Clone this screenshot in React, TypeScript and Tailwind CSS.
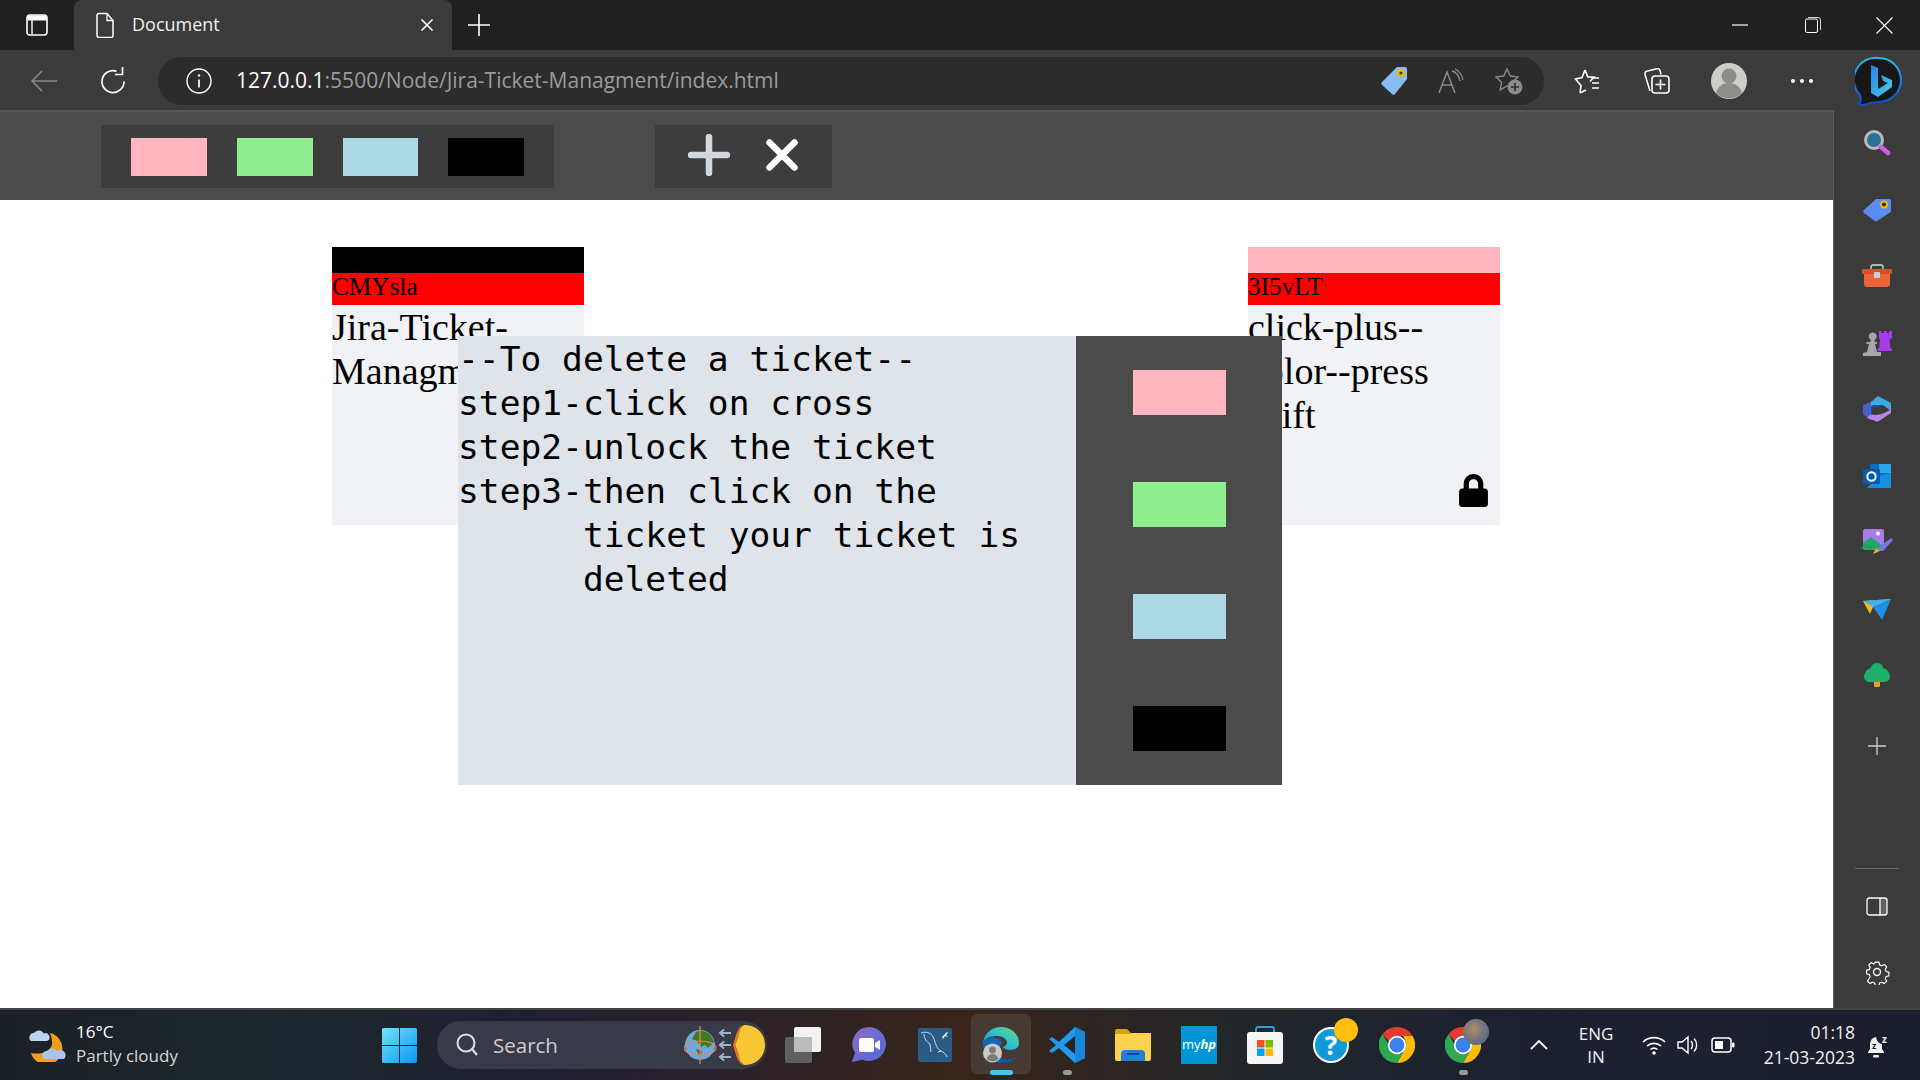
import React from 'react';
import { FaLock } from 'react-icons/fa';

const ui = "font-['Open_Sans','Noto_Sans',sans-serif]";

const Stroke = ({ w, h, children, className = '' }: { w: number; h: number; children: React.ReactNode; className?: string }) => (
  <svg width={w} height={h} viewBox={`0 0 ${w} ${h}`} fill="none" stroke="currentColor" className={className}>
    {children}
  </svg>
);

const Swatch = ({ color }: { color: string }) => <div className={`${color} h-[38px] w-[76px]`} />;

const ModalSwatch = ({ color }: { color: string }) => <div className={`${color} h-[45px] w-[93px]`} />;

const Ticket = ({ header, id, text, locked }: { header: string; id: string; text: string; locked?: boolean }) => (
  <div className="flex h-[278px] w-[252px] flex-col font-['Liberation_Serif',serif] text-black">
    <div className={`${header} h-[26px] shrink-0`} />
    <div className="h-[32px] shrink-0 bg-[#ff0000] text-[25.3px] leading-[26px]">{id}</div>
    <div className="flex flex-1 flex-col bg-[#f1f2f6] text-[38px] leading-[44px]">
      <div className="break-words">{text}</div>
      {locked && <FaLock size={33} className="mt-auto mb-[18px] mr-[10px] self-end" />}
    </div>
  </div>
);

const SideIcon = ({ children }: { children: React.ReactNode }) => (
  <div className="flex h-[66.5px] w-full items-center justify-center">{children}</div>
);

const TaskIcon = ({ children, dot, active }: { children: React.ReactNode; dot?: boolean; active?: boolean }) => (
  <div className="relative flex h-[70px] w-[66px] items-center justify-center">
    {active && <div className="absolute left-[3px] top-[4px] h-[60px] w-[60px] rounded-md border border-[#4a3d36] bg-[#463a34]" />}
    <div className="relative flex">{children}</div>
    {dot && <div className="absolute bottom-[5px] left-[29px] h-[5px] w-[9px] rounded-full bg-[#9a9a9a]" />}
    {active && <div className="absolute bottom-[5px] left-[22px] h-[5px] w-[23px] rounded-full bg-[#4cc2ff]" />}
  </div>
);

const ChromeLogo = () => (
  <svg width="36" height="36" viewBox="0 0 36 36">
    <path d="M18 0a18 18 0 0 1 15.6 9H18a9 9 0 0 0-8.2 5.2L3.6 7A18 18 0 0 1 18 0z" fill="#e33b2e" />
    <path d="M33.6 9A18 18 0 0 1 18 36l7.8-13.5A9 9 0 0 0 26 13.5 9 9 0 0 0 24 9z" fill="#fbbc04" />
    <path d="M18 36A18 18 0 0 1 3.6 7l7.6 13.2A8 8 0 0 0 18 27h3.4l4.4-4.5z" fill="#2fa84f" />
    <circle cx="18" cy="18" r="9.2" fill="#fff" />
    <circle cx="18" cy="18" r="7.4" fill="#3b82f0" />
  </svg>
);

const Avatar = ({ size }: { size: number }) => (
  <svg width={size} height={size} viewBox="0 0 36 36">
    <circle cx="18" cy="18" r="18" fill="#cdcdc9" />
    <circle cx="18" cy="13" r="7.5" fill="#8f8d89" />
    <path d="M5 30c2-7 7-10 13-10s11 3 13 10a18 18 0 0 1-26 0z" fill="#8f8d89" />
  </svg>
);

const TabStrip = () => (
  <div className="flex h-[50px] shrink-0 items-end bg-[#202020] text-white">
    <div className="flex h-[50px] w-[74px] items-center justify-center">
      <Stroke w={24} h={24} className="-mt-[1px]">
        <rect x="2" y="2" width="20" height="20" rx="3" strokeWidth="1.6" />
        <path d="M3 3h18v4H3z" fill="currentColor" strokeWidth="1" />
        <path d="M7 7v14" strokeWidth="1.4" />
      </Stroke>
    </div>
    <div className={`${ui} flex h-[50px] w-[378px] items-center rounded-t-lg bg-[#3b3b3b] pl-[20px] pr-[18px] text-[18px]`}>
      <Stroke w={22} h={26}>
        <path d="M3 3.5a2 2 0 0 1 2-2h8l6 7v15a2 2 0 0 1-2 2H5a2 2 0 0 1-2-2z" strokeWidth="1.5" />
        <path d="M13 1.5v7h6" strokeWidth="1.3" />
      </Stroke>
      <span className="ml-[16px] -mt-[1px] text-[#f0f0f0]">Document</span>
      <Stroke w={14} h={14} className="ml-auto">
        <path d="M1.5 1.5l11 11M12.5 1.5l-11 11" strokeWidth="1.6" />
      </Stroke>
    </div>
    <div className="flex h-[50px] w-[54px] items-center justify-center">
      <Stroke w={22} h={22}>
        <path d="M11 0v22M0 11h22" strokeWidth="1.6" />
      </Stroke>
    </div>
    <div className="ml-auto flex h-[50px] items-center">
      <Stroke w={16} h={2} className="mr-[57px]">
        <path d="M0 1h16" strokeWidth="1.2" />
      </Stroke>
      <Stroke w={16} h={16} className="mr-[55px]">
        <rect x="0.5" y="2" width="12" height="13.5" rx="1.5" strokeWidth="1" />
        <path d="M3 .5h10a2.5 2.5 0 0 1 2.5 2.5v10" strokeWidth="0.8" />
      </Stroke>
      <Stroke w={17} h={17} className="mr-[27px]">
        <path d="M.5.5l16 16M16.5.5l-16 16" strokeWidth="1.1" />
      </Stroke>
    </div>
  </div>
);

const Toolbar = () => (
  <div className="flex h-[60px] shrink-0 items-center bg-[#3b3b3b] pt-[2px] text-white">
    <Stroke w={28} h={24} className="ml-[30px] text-[#8a8a8a]">
      <path d="M27 12H2M12 2L2 12l10 10" strokeWidth="1.5" />
    </Stroke>
    <Stroke w={26} h={28} className="ml-[42px]">
      <path d="M16.5 4.2A11 11 0 1 0 24 14.5" strokeWidth="1.7" />
      <path d="M17.5 1v7.5h-7.5" strokeWidth="1.7" transform="translate(5 -1)" />
    </Stroke>
    <div className={`${ui} ml-[32px] flex h-[48px] w-[1386px] items-center rounded-full bg-[#2c2c2c]`}>
      <Stroke w={26} h={26} className="ml-[28px]">
        <circle cx="13" cy="13" r="12" strokeWidth="1.4" />
        <path d="M13 11.5v8" strokeWidth="1.7" />
        <circle cx="13" cy="7.5" r="1.2" fill="currentColor" stroke="none" />
      </Stroke>
      <div className="ml-[24px] text-[21px] text-[#9b9b9b]">
        <span className="text-white">127.0.0.1</span>:5500/Node/Jira-Ticket-Managment/index.html
      </div>
      <svg width="28" height="30" viewBox="0 0 28 30" className="ml-auto mr-[30px]">
        <path d="M17 1h8a2 2 0 0 1 2 2v10l-12 15a2 2 0 0 1-3 0L2 19a2 2 0 0 1 0-3z" fill="#85bdee" />
        <circle cx="21" cy="7" r="4" fill="#f2b800" />
        <circle cx="21" cy="7" r="1.6" fill="#3a3a3a" />
      </svg>
      <Stroke w={26} h={26} className="mr-[31px] text-[#8b8b8b]">
        <path d="M1 25L9 4l8 21M4 17h10" strokeWidth="1.5" />
        <path d="M14 2c4 1 7 5 8 10M17 0c4 2 7 6 8 11" strokeWidth="1.3" transform="translate(0 1)" />
      </Stroke>
      <svg width="28" height="28" viewBox="0 0 28 28" className="mr-[21px]" fill="none">
        <path d="M12 2l3.3 7 7.7 1-5.6 5.2 1.4 7.6L12 19l-6.8 3.8 1.4-7.6L1 10l7.7-1z" stroke="#8b8b8b" strokeWidth="1.4" />
        <circle cx="20" cy="20" r="7.5" fill="#8b8b8b" />
        <path d="M20 16v8M16 20h8" stroke="#2c2c2c" strokeWidth="1.6" />
      </svg>
    </div>
    <Stroke w={26} h={26} className="ml-[30px]">
      <path d="M11 2l2.8 7H20l-4 4.5M6 25l1-7.5L1.5 11 8 9.5 11 2M6 25l6-3" strokeWidth="1.6" />
      <path d="M17 10h8M18 15h7M18 20h7" strokeWidth="1.6" />
    </Stroke>
    <Stroke w={28} h={28} className="ml-[43px]">
      <path d="M7 24L2 7.5a2.5 2.5 0 0 1 1.7-3.2l10-2.5A2.5 2.5 0 0 1 17 3.5l1 4" strokeWidth="1.5" />
      <rect x="9" y="9" width="17" height="17" rx="3" strokeWidth="1.6" />
      <path d="M17.5 12.5v10M12.5 17.5h10" strokeWidth="1.6" />
    </Stroke>
    <div className="ml-[40px] flex">
      <Avatar size={36} />
    </div>
    <div className="ml-[44px] flex gap-[5px]">
      <div className="h-[4px] w-[4px] rounded-full bg-white" />
      <div className="h-[4px] w-[4px] rounded-full bg-white" />
      <div className="h-[4px] w-[4px] rounded-full bg-white" />
    </div>
    <svg width="48" height="50" viewBox="0 0 48 50" className="ml-[42px]">
      <defs>
        <linearGradient id="bingRing" x1="0" y1="0" x2="0" y2="1">
          <stop offset="0" stopColor="#2fb8f2" />
          <stop offset="1" stopColor="#1348d6" />
        </linearGradient>
        <linearGradient id="bingB" x1="0" y1="0" x2="1" y2="1">
          <stop offset="0" stopColor="#2a7fe8" />
          <stop offset="1" stopColor="#42d0ea" />
        </linearGradient>
      </defs>
      <path d="M24 2a22 22 0 0 1 0 44c-5 0-9 .8-14 2.5-3 1-5 .5-6-.5 2-2 2-5 1-9A22 22 0 0 1 24 2z" fill="#171717" stroke="url(#bingRing)" strokeWidth="2" />
      <path d="M16 9l7 3v21l10-6-5-2-2-6 11 5v7L23 41l-7-4z" fill="url(#bingB)" />
    </svg>
  </div>
);

const Sidebar = () => (
  <div className="flex w-[87px] shrink-0 flex-col items-center border-l border-[#5a5a5a] bg-[#3b3b3b]">
    <div className="w-full">
      <SideIcon>
        <svg width="28" height="28" viewBox="0 0 28 28">
          <circle cx="11" cy="11" r="8.5" fill="#2b6f96" stroke="#b9b9b5" strokeWidth="3" />
          <path d="M18 18l7 6" stroke="#cf5fe6" strokeWidth="4.5" strokeLinecap="round" />
        </svg>
      </SideIcon>
      <SideIcon>
        <svg width="28" height="24" viewBox="0 0 28 24">
          <path d="M13 1h13a2 2 0 0 1 2 2v10a2 2 0 0 1-1 1.5L14 23a2 2 0 0 1-2 0L1 15a2 2 0 0 1 0-3z" fill="#5b8dee" />
          <circle cx="21" cy="6.5" r="3" fill="#333" stroke="#f2c200" strokeWidth="1.8" />
        </svg>
      </SideIcon>
      <SideIcon>
        <svg width="30" height="24" viewBox="0 0 30 24">
          <path d="M9 6V3a2 2 0 0 1 2-2h8a2 2 0 0 1 2 2v3" fill="none" stroke="#b5b5b5" strokeWidth="1.8" />
          <rect x="0" y="5" width="30" height="5" rx="1" fill="#d84f27" />
          <path d="M2 10h26v10a3 3 0 0 1-3 3H5a3 3 0 0 1-3-3z" fill="#e8663a" />
          <rect x="12" y="8" width="6" height="6" rx="1" fill="#cfcfcf" />
        </svg>
      </SideIcon>
      <SideIcon>
        <svg width="30" height="26" viewBox="0 0 30 26">
          <path d="M9 10a4 4 0 1 1 3.5 0l.5 2h2v2h-2l2 8h4v4H1v-3l4-1 2-8H4.5v-2H8z" fill="#a6a6a6" />
          <path d="M17 1h2.5v2H22V1h2.5v2H27V1h3v7l-2.5 2 1 8L30 19v2H15.5v-2l1.5-1 1-8-1-2z" fill="#a83bea" />
        </svg>
      </SideIcon>
      <SideIcon>
        <svg width="28" height="28" viewBox="0 0 28 28">
          <path d="M8 7L15 1l13 7v8l-8-6H11a5 5 0 0 0-3 2z" fill="#3fa9e6" />
          <path d="M0 10l8-3v14l-2 3-6-5z" fill="#4c5fc4" />
          <path d="M8 19c4 2 12 1 20-5v4l-12 8a4 4 0 0 1-4 0L4 23z" fill="#b488e6" />
          <path d="M8 12a3 3 0 0 1 3-2h9l-5 2H9v9l-1-2z" fill="#1f4fa8" />
        </svg>
      </SideIcon>
      <SideIcon>
        <svg width="28" height="24" viewBox="0 0 28 24">
          <path d="M7 0h20a1 1 0 0 1 1 1v22a1 1 0 0 1-1 1H7z" fill="#0f6cbd" />
          <path d="M16 0h11a1 1 0 0 1 1 1v8H16z" fill="#28a8ea" />
          <path d="M16 12l12-3v14a1 1 0 0 1-1 1H4z" fill="#1490df" />
          <rect x="0" y="5" width="17" height="15" rx="1.5" fill="#0a5bb0" />
          <circle cx="8.5" cy="12.5" r="4.2" fill="none" stroke="#fff" strokeWidth="2" />
        </svg>
      </SideIcon>
      <SideIcon>
        <svg width="32" height="26" viewBox="0 0 32 26">
          <rect x="2" y="0" width="21" height="21" rx="2" fill="#a87bea" />
          <circle cx="17" cy="4.5" r="2" fill="#fff" />
          <path d="M2 19V14l8-6 13 10v3H4z" fill="#22a86b" />
          <path d="M0 19c3 0 3-3 6-2s4 2 6 1" fill="none" stroke="#16a34a" strokeWidth="1.5" />
          <path d="M16 22l2-4 12-9 2 2-10 11z" fill="#7b74e8" />
          <path d="M12 25l3-6 4 3z" fill="#f0a92c" />
        </svg>
      </SideIcon>
      <SideIcon>
        <svg width="28" height="22" viewBox="0 0 28 22">
          <path d="M0 3l28-2-18 8-3 7z" fill="#f5b61f" />
          <path d="M0 3l28-2-18 8z" fill="#3db1f1" />
          <path d="M10 9l18-8-9 21z" fill="#1e8fe6" />
        </svg>
      </SideIcon>
      <SideIcon>
        <svg width="26" height="24" viewBox="0 0 26 24">
          <rect x="10" y="17" width="6" height="7" rx="1" fill="#f0a11e" />
          <path d="M13 0c4 0 6 3 6 5 4 1 7 5 7 9 0 3-3 5-6 5H6c-3 0-6-2-6-5 0-4 3-8 7-9 0-2 2-5 6-5z" fill="#1fb06a" />
        </svg>
      </SideIcon>
      <div className="mt-[4px]">
        <SideIcon>
          <Stroke w={18} h={18} className="text-[#d0d0d0]">
            <path d="M9 0v18M0 9h18" strokeWidth="1.3" />
          </Stroke>
        </SideIcon>
      </div>
    </div>
    <div className="mt-auto h-[1px] w-[44px] bg-[#6a6a6a]" />
    <Stroke w={22} h={20} className="mt-[28px] text-white">
      <rect x="1" y="1" width="20" height="17" rx="2.5" strokeWidth="1.3" />
      <path d="M14 1v17" strokeWidth="1.3" />
      <path d="M14 1h5a2 2 0 0 1 2 2v13a2 2 0 0 1-2 2h-5z" fill="currentColor" fillOpacity="0.2" stroke="none" />
    </Stroke>
    <Stroke w={26} h={26} className="mb-[23px] mt-[42px] text-white">
      <circle cx="13" cy="13" r="3.5" strokeWidth="1.4" />
      <path d="M11 2h4l.7 3 2.5 1 2.7-1.6 2.8 2.8-1.6 2.7 1 2.5 3 .7v4l-3 .7-1 2.5 1.6 2.7-2.8 2.8-2.7-1.6-2.5 1-.7 3h-4l-.7-3-2.5-1-2.7 1.6-2.8-2.8L5.3 18.2l-1-2.5-3-.7v-4l3-.7 1-2.5L3.7 5.2l2.8-2.8 2.7 1.6 1-1z" strokeWidth="1.3" transform="translate(1.4 1.4) scale(.9)" />
    </Stroke>
  </div>
);

const Taskbar = () => (
  <div className={`${ui} flex h-[72px] shrink-0 items-center border-t-2 border-[#454545] bg-[linear-gradient(90deg,#1b2026_0%,#1c282d_14%,#1f2030_27%,#28212a_37%,#38241a_50%,#2c2523_58%,#20262a_66%,#1c2031_80%,#1b1e2b_100%)] text-white`}>
    <svg width="38" height="34" viewBox="0 0 38 34" className="ml-[28px] shrink-0">
      <path d="M22 5a16 16 0 1 1-19 20c9 2 20-1 21-9 .5-4-1-8-2-11z" fill="#f29f1c" />
      <path d="M3 13a4.5 4.5 0 0 1 3-8 6 6 0 0 1 10 .5A4 4 0 0 1 19 13z" fill="#bcd4f2" />
      <path d="M16 31a4.5 4.5 0 0 1 3-8 6 6 0 0 1 10 .5A4 4 0 0 1 36 31z" fill="#a9c6ee" />
    </svg>
    <div className="ml-[10px] w-[306px] shrink-0 -mt-[3px] text-[17px] leading-[24px] text-[#d6d6d6]">
      <div className="text-white">16°C</div>
      <div>Partly cloudy</div>
    </div>
    <svg width="35" height="35" viewBox="0 0 35 35" className="shrink-0">
      <defs>
        <linearGradient id="win" x1="0" y1="0" x2="1" y2="1">
          <stop offset="0" stopColor="#6fe4fb" />
          <stop offset="1" stopColor="#0b95f2" />
        </linearGradient>
      </defs>
      <path d="M0 1.5A1.5 1.5 0 0 1 1.5 0H17v17H0zM18 0h15.5A1.5 1.5 0 0 1 35 1.5V17H18zM0 18h17v17H1.5A1.5 1.5 0 0 1 0 33.5zM18 18h17v15.5a1.5 1.5 0 0 1-1.5 1.5H18z" fill="url(#win)" />
    </svg>
    <div className="ml-[20px] flex h-[48px] w-[330px] shrink-0 items-center rounded-full bg-[#383a47] pl-[19px]">
      <Stroke w={22} h={24} className="shrink-0 text-[#e0e0e0]">
        <circle cx="10" cy="10" r="8.5" strokeWidth="2" />
        <path d="M16 16l5 6" strokeWidth="2.2" />
      </Stroke>
      <span className="ml-[15px] text-[20.5px] text-[#cfcfd2]">Search</span>
      <svg width="86" height="44" viewBox="0 0 86 44" className="ml-auto -mr-[3px] shrink-0">
        <circle cx="16" cy="22" r="15" fill="#6fa8dc" />
        <path d="M12 9c8-3 16 2 18 10l-6 6-3-3-4 2-4-6-5-2z" fill="#3d7a1e" />
        <path d="M12 26l6 2-2 7z" fill="#3d7a1e" />
        <ellipse cx="16" cy="25" rx="16" ry="7" fill="none" stroke="#f0815f" strokeWidth="1.2" />
        <path d="M16 3v38" stroke="#f0815f" strokeWidth="1.2" />
        <path d="M47 10H36m4-3.5L36 10l4 3.5M47 22H36m4-3.5L36 22l4 3.5M47 34H36m4-3.5L36 34l4 3.500" stroke="#9fb2c8" strokeWidth="2" fill="none" />
        <path d="M60 2c14 0 21 10 21 20s-7 20-21 20l-4-4-2-8-3-8 3-8 2-8z" fill="#f9c733" />
        <path d="M60 2c-4 3-5 8-5 10l-4 10 4 10c0 2 1 7 5 10-3 0-6-4-8-10l-3-10 3-10c2-6 5-10 8-10z" fill="#e8761c" />
      </svg>
    </div>
    <div className="ml-[3px] flex shrink-0">
      <TaskIcon>
        <svg width="36" height="36" viewBox="0 0 36 36">
          <rect x="9" y="0" width="27" height="25" rx="2" fill="#f2f2f2" />
          <rect x="0" y="10" width="27" height="26" rx="2" fill="#5f5f5f" />
          <rect x="9" y="10" width="18" height="15" fill="#bcbcbc" />
        </svg>
      </TaskIcon>
      <TaskIcon>
        <svg width="34" height="36" viewBox="0 0 34 36">
          <defs>
            <linearGradient id="meet" x1="0" y1="0" x2="1" y2="1">
              <stop offset="0" stopColor="#8d6cc9" />
              <stop offset="1" stopColor="#4c6ad8" />
            </linearGradient>
          </defs>
          <path d="M17 0a17 17 0 1 1-7 32.5L1 35c-1 0-1-1-.5-2L3 26A17 17 0 0 1 17 0z" fill="url(#meet)" />
          <rect x="7" y="11" width="15" height="14" rx="2" fill="#fff" />
          <path d="M23 16l5-3v10l-5-3z" fill="#fff" />
        </svg>
      </TaskIcon>
      <TaskIcon>
        <svg width="34" height="34" viewBox="0 0 34 34">
          <rect width="34" height="34" rx="2" fill="#2a5b85" />
          <path d="M3 5c6-2 11 0 13 6 2 5 2 9 7 12 2 1 5 3 6 6M6 6c0 5 3 8 6 10l1 8M23 23l-3 1" fill="none" stroke="#dfe8ef" strokeWidth="0.9" />
          <path d="M24 9l5-5 1 1-2 2 2 2-3-1-2 3z" fill="#eef3f7" />
        </svg>
      </TaskIcon>
      <TaskIcon active>
        <svg width="36" height="36" viewBox="0 0 36 36">
          <defs>
            <linearGradient id="edgeTop" x1="0" y1="1" x2="1" y2="0">
              <stop offset="0" stopColor="#0f7fc9" />
              <stop offset="0.5" stopColor="#2bbfd6" />
              <stop offset="1" stopColor="#6fd95f" />
            </linearGradient>
          </defs>
          <path d="M0 15C2 6 9 0 18 0c10 0 18 7 18 16 0 5-4 7-9 7-3 0-6-1-7-3 3-1 4-3 4-5-1-4-6-6-10-6C8 9 3 11 0 15z" fill="url(#edgeTop)" />
          <path d="M0 15c3-4 8-5 13-4 4 1 6 3 6 5l-6 9c-1 5 2 9 6 11C8 36 0 27 0 15z" fill="#1766b5" />
          <path d="M19 36c-4-2-6-6-5-11 2 6 8 9 14 7 2-.7 5-2 6-3-3 4-8 7-15 7z" fill="#0c5aa8" />
          <circle cx="9.5" cy="26" r="9.5" fill="#c9c9c5" />
          <circle cx="9.5" cy="23" r="3.4" fill="#7d7b77" />
          <path d="M3.5 32c1-3 3-5 6-5s5 2 6 5a9 9 0 0 1-12 0z" fill="#7d7b77" />
        </svg>
      </TaskIcon>
      <TaskIcon dot>
        <svg width="36" height="36" viewBox="0 0 36 36">
          <path d="M26 0l10 5v26l-10 5L10 21l-7 5-3-2 7-6-7-6 3-2 7 5z" fill="#1f9cf0" />
          <path d="M26 0v36l10-5V5z" fill="#1a86d8" />
          <path d="M26 9L15 18l11 9z" fill="#242528" />
        </svg>
      </TaskIcon>
      <TaskIcon>
        <svg width="36" height="32" viewBox="0 0 36 32">
          <path d="M0 2a2 2 0 0 1 2-2h10l4 4h18a2 2 0 0 1 2 2v4H0z" fill="#d99f0b" />
          <path d="M0 5h14l3-1h19v26a2 2 0 0 1-2 2H2a2 2 0 0 1-2-2z" fill="#fcd34d" />
          <path d="M6 32V25a4 4 0 0 1 4-4h16a4 4 0 0 1 4 4v7z" fill="#1d82cf" />
          <rect x="12" y="24" width="12" height="2" fill="#0c4f87" />
        </svg>
      </TaskIcon>
      <TaskIcon>
        <div className="flex h-[38px] w-[36px] items-center justify-center bg-[#0096d6] text-[13px] text-white">
          my<span className="font-bold italic">hp</span>
        </div>
      </TaskIcon>
      <TaskIcon>
        <svg width="36" height="38" viewBox="0 0 36 38">
          <path d="M9 6V3a2 2 0 0 1 2-2h14a2 2 0 0 1 2 2v3" fill="none" stroke="#29a3e0" strokeWidth="1.8" />
          <rect x="0" y="6" width="36" height="32" rx="3" fill="#f5f5f5" />
          <rect x="10" y="14" width="7.5" height="7.5" fill="#f25022" />
          <rect x="18.5" y="14" width="7.5" height="7.5" fill="#7fba00" />
          <rect x="10" y="22.5" width="7.5" height="7.5" fill="#00a4ef" />
          <rect x="18.5" y="22.5" width="7.5" height="7.5" fill="#ffb900" />
        </svg>
      </TaskIcon>
      <TaskIcon>
        <div className="flex h-[36px] w-[36px] items-center justify-center rounded-full border-2 border-white bg-[#0f9ad8] text-[26px] font-bold leading-none text-white">
          ?
        </div>
        <div className="absolute -right-[9px] -top-[9px] h-[24px] w-[24px] rounded-full bg-[#ffbe0b]" />
      </TaskIcon>
      <TaskIcon>
        <ChromeLogo />
      </TaskIcon>
      <TaskIcon dot>
        <ChromeLogo />
        <div className="absolute -right-[8px] -top-[8px] h-[26px] w-[26px] rounded-full bg-[radial-gradient(circle_at_40%_40%,#b08a6a,#5b6b85_70%,#4a4f5a)]" />
      </TaskIcon>
    </div>
    <Stroke w={18} h={10} className="ml-[34px] shrink-0">
      <path d="M1 9l8-8 8 8" strokeWidth="1.8" />
    </Stroke>
    <div className="ml-[23px] w-[50px] shrink-0 text-center text-[17px] leading-[23px] text-[#f0f0f0]">
      <div>ENG</div>
      <div>IN</div>
    </div>
    <Stroke w={24} h={20} className="ml-[21px] shrink-0">
      <path d="M1 7a16 16 0 0 1 22 0M5 11a10.5 10.5 0 0 1 14 0M8.5 14.5a5.5 5.5 0 0 1 7 0" strokeWidth="1.6" />
      <circle cx="12" cy="18" r="1.8" fill="currentColor" stroke="none" />
    </Stroke>
    <Stroke w={24} h={20} className="ml-[11px] shrink-0">
      <path d="M1 7h4l6-5v16l-6-5H1zM14 6c2 2 2 6 0 8M17 3.5c3.5 3.5 3.5 9.5 0 13" strokeWidth="1.4" />
    </Stroke>
    <Stroke w={24} h={16} className="ml-[10px] shrink-0">
      <rect x="1" y="1" width="19" height="14" rx="3" strokeWidth="1.5" />
      <rect x="4" y="4" width="8" height="8" fill="currentColor" stroke="none" />
      <rect x="21" y="5.5" width="2.5" height="5" rx="1" fill="currentColor" stroke="none" />
    </Stroke>
    <div className="ml-[10px] w-[110px] shrink-0 text-right text-[17.5px] leading-[25px] text-[#f0f0f0]">
      <div>01:18</div>
      <div>21-03-2023</div>
    </div>
    <svg width="26" height="30" viewBox="0 0 26 30" className="ml-[12px] shrink-0" fill="#f0f0f0">
      <path d="M9 7a7 7 0 0 0-6 7v5l-2 3v1h16v-1l-2-3v-5c-1 0-5-1-6-7z" />
      <rect x="6" y="25" width="6" height="2.5" rx="1.2" />
      <text x="5" y="19" fontSize="9" fontWeight="700" fill="#1b1e2b" fontFamily="Open Sans, sans-serif">z</text>
      <text x="15" y="13" fontSize="10" fontWeight="700" fill="#f0f0f0" fontFamily="Open Sans, sans-serif">z</text>
    </svg>
  </div>
);

export default function App() {
  return (
    <div className="flex h-[1080px] w-[1920px] flex-col overflow-hidden bg-white">
      <TabStrip />
      <Toolbar />
      <div className="flex min-h-0 flex-1">
        <main className="relative min-w-0 flex-1 bg-white">
          <header className="flex h-[90px] items-center border-t-2 border-[#575757] bg-[#4b4b4b] pl-[101px] pt-[1px]">
            <div className="flex h-[63px] w-[453px] items-center gap-[30px] bg-[#3d3d3d] px-[30px]">
              <Swatch color="bg-[#ffb6c1]" />
              <Swatch color="bg-[#90ee90]" />
              <Swatch color="bg-[#add8e6]" />
              <Swatch color="bg-black" />
            </div>
            <div className="ml-[101px] flex h-[63px] w-[177px] items-center bg-[#3d3d3d] pl-[33px]">
              <svg width="42" height="42" viewBox="0 0 42 42" className="-mt-[4px] shrink-0">
                <path d="M21 3v36M3 21h36" stroke="#d1d8e0" strokeWidth="6.5" strokeLinecap="round" />
              </svg>
              <svg width="32" height="32" viewBox="0 0 32 32" className="ml-[36px] -mt-[4px] shrink-0">
                <path d="M3.5 3.5l25 25M28.5 3.5l-25 25" stroke="#fff" strokeWidth="6.5" strokeLinecap="round" />
              </svg>
            </div>
          </header>
          <section className="flex justify-between pl-[332px] pr-[333px] pt-[47px]">
            <Ticket header="bg-black" id="CMYsla" text="Jira-Ticket-Managment" />
            <Ticket header="bg-[#ffb6c1]" id="3I5vLT" text="click-plus--color--press shift" locked />
          </section>
          <div className="absolute left-[458px] top-[226px] flex h-[449px] w-[824px]">
            <div className="w-[618px] whitespace-pre bg-[#dfe4ea] pt-[1px] font-['DejaVu_Sans_Mono',monospace] text-[34.6px] leading-[44px] text-black">
              {`--To delete a ticket--
step1-click on cross
step2-unlock the ticket
step3-then click on the
      ticket your ticket is
      deleted`}
            </div>
            <div className="flex w-[206px] flex-col items-center justify-around bg-[#4b4b4b]">
              <ModalSwatch color="bg-[#ffb6c1]" />
              <ModalSwatch color="bg-[#90ee90]" />
              <ModalSwatch color="bg-[#add8e6]" />
              <ModalSwatch color="bg-black" />
            </div>
          </div>
        </main>
        <Sidebar />
      </div>
      <Taskbar />
    </div>
  );
}
